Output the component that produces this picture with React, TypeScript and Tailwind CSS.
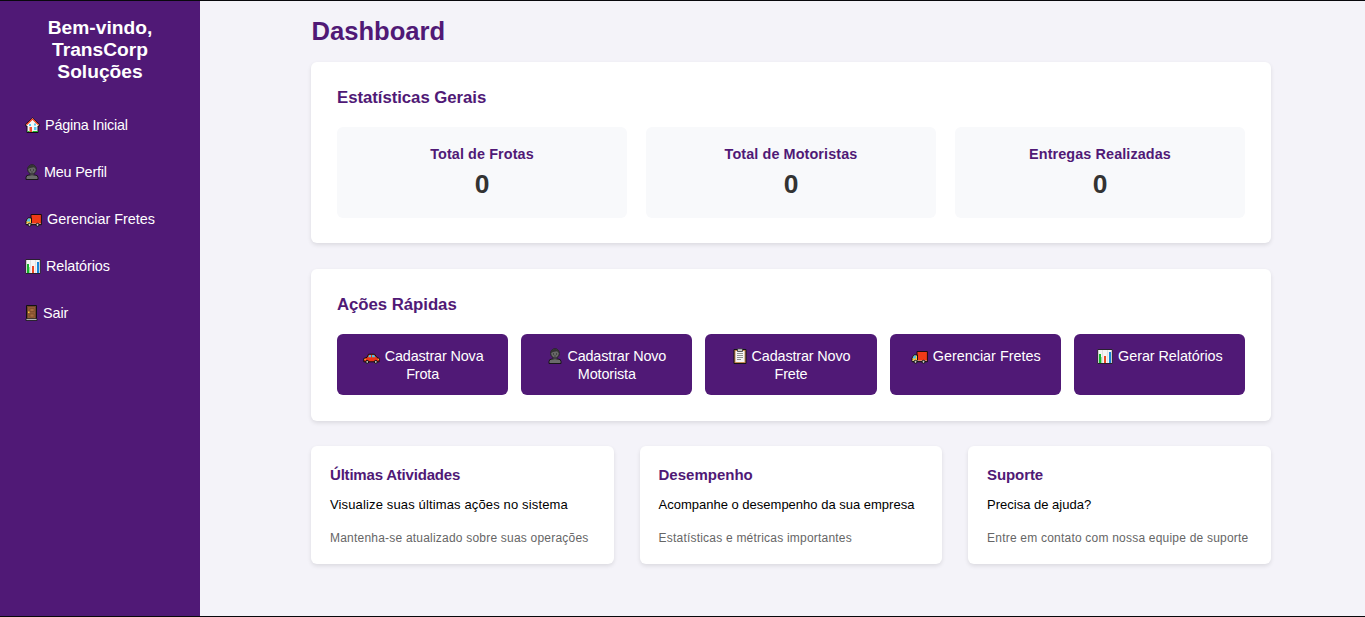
import type { ReactNode } from "react";

type IconProps = { className?: string };

function House({ className = "" }: IconProps) {
  return (
    <svg className={`inline-block h-4 w-[15px] shrink-0 ${className}`} viewBox="0 0 15 16">
      <path d="M7.5 .8 14.3 7.200V9H13v6.500H2V9H.7V7.200Z" fill="#f6f6f6" stroke="#140a18" strokeWidth="1" />
      <path d="M1.500 7.800 7.500 2 13.500 7.800" fill="none" stroke="#f03a17" strokeWidth="1.200" />
      <path d="M4 7h2v2H4zM9 6.500h2v2H9zM9 10h2.500v3H9z" fill="#55c8ee" />
      <path d="M4.500 10H7v5H4.500z" fill="#f05030" />
      <path d="M2.500 14.500h2M7.500 14.500H13" stroke="#25b72c" />
    </svg>
  );
}

function Person({ className = "" }: IconProps) {
  return (
    <svg className={`inline-block h-4 w-[14px] shrink-0 ${className}`} viewBox="0 0 14 16">
      <path d="M1 15.5V13.500Q1 11 4 11h6Q13 11 13 13.500V15.500Z" fill="#6b6b6b" stroke="#161616" />
      <path d="M5.500 9h3v2.800h-3z" fill="#606060" />
      <ellipse cx="7" cy="5.400" rx="4.300" ry="4.700" fill="#676767" stroke="#222" />
      <path d="M3 5C2.500 2 4.500 1 7 1C9.500 1 11.500 2 11 5L9 3.200L5 4Z" fill="#333" />
      <path d="M5 6h1M8 6h1" stroke="#222" />
      <path d="M6 8h2" stroke="#333" strokeWidth=".7" />
    </svg>
  );
}

function Truck({ className = "" }: IconProps) {
  return (
    <svg className={`inline-block h-4 w-[17px] shrink-0 ${className}`} viewBox="0 0 17 16">
      <path d="M6 3.500h10.400v10H6z" fill="#f03a17" stroke="#1a0c12" />
      <path d="M3 7h3.500v6.500H1V10Z" fill="#ffc83d" stroke="#1a0c12" />
      <path d="M3 7.500H5V10.500H1.500Z" fill="#4cc2e8" />
      <path d="M1 12.800h15" stroke="#ccc" strokeWidth=".7" />
      <path d="M1 13.700h15.500" stroke="#181818" />
      <circle cx="4.500" cy="13.800" r="1.500" fill="#ccc" stroke="#111" />
      <circle cx="12.500" cy="13.800" r="1.500" fill="#ccc" stroke="#111" />
    </svg>
  );
}

function Chart({ className = "" }: IconProps) {
  return (
    <svg className={`inline-block h-4 w-4 shrink-0 ${className}`} viewBox="0 0 16 16">
      <path d="M.7 1.500h14.600v14H.7z" fill="#f5f5f5" stroke="#29202e" />
      <path d="M5.500 2v13M10.500 2v13" stroke="#d8d8d8" strokeWidth=".7" />
      <path d="M2 6h2v9H2z" fill="#16b52c" />
      <path d="M4 9h1v6H4z" fill="#a0dda6" />
      <path d="M7 8h2v7H7z" fill="#ed4824" />
      <path d="M12 4h2v11h-2z" fill="#1687d9" />
    </svg>
  );
}

function Door({ className = "" }: IconProps) {
  return (
    <svg className={`inline-block h-4 w-[13px] shrink-0 ${className}`} viewBox="0 0 13 16">
      <path d="M1.500.5h10v14h-10z" fill="#70432c" stroke="#111" />
      <path d="M3 2h7v12H3z" fill="#915a35" />
      <path d="M5 3.500h4v3H5zM5 9h4v3H5z" fill="#a66b3f" stroke="#744327" strokeWidth=".6" />
      <path d="M3 6.500h1.500V8H3z" fill="#ffc83d" />
      <path d="M1 13.700h11v1.800H1z" fill="#cfcfcf" stroke="#111" strokeWidth=".8" />
    </svg>
  );
}

function Car({ className = "" }: IconProps) {
  return (
    <svg className={`inline-block h-4 w-[17px] shrink-0 ${className}`} viewBox="0 0 17 16">
      <path d="M.8 10.500 4 9.300 5.500 6.200h6L14 9.500l2.200 1v3.300H.8Z" fill="#ed3519" stroke="#171010" />
      <path d="M5.200 9.300 6.300 6.900H8v2.400zM9 6.900h2l1.500 2.400H9z" fill="#4cc2e8" />
      <path d="M1.300 11.300h1.500M14.800 11.300h1.200" stroke="#ffc83d" />
      <circle cx="4.200" cy="13.900" r="1.500" fill="#bbb" stroke="#111" />
      <circle cx="12.800" cy="13.900" r="1.500" fill="#bbb" stroke="#111" />
    </svg>
  );
}

function Clipboard({ className = "" }: IconProps) {
  return (
    <svg className={`inline-block h-4 w-[14px] shrink-0 ${className}`} viewBox="0 0 14 16">
      <path d="M1 1.500h12v14H1z" fill="#c88a52" stroke="#151515" />
      <path d="M2.500 3h9v11h-9z" fill="#f5f5f5" />
      <path d="M4.500.8h5v2.700h-5z" fill="#ccc" stroke="#333" strokeWidth=".8" />
      <path d="M4 5.500h6M4 7.500h6M4 9.500h6M4 11.500h4" stroke="#777" strokeWidth=".8" />
    </svg>
  );
}

const menu: { icon: ReactNode; label: string; tracking: string }[] = [
  { icon: <House />, label: "Página Inicial", tracking: "tracking-[-0.2px]" },
  { icon: <Person />, label: "Meu Perfil", tracking: "tracking-[-0.2px]" },
  { icon: <Truck />, label: "Gerenciar Fretes", tracking: "tracking-normal" },
  { icon: <Chart />, label: "Relatórios", tracking: "tracking-[-0.1px]" },
  { icon: <Door />, label: "Sair", tracking: "tracking-[-0.1px]" },
];

const stats = ["Total de Frotas", "Total de Motoristas", "Entregas Realizadas"];

const actions: { icon: ReactNode; first: string; second?: string; tracking: string }[] = [
  { icon: <Car />, first: "Cadastrar Nova", second: "Frota", tracking: "tracking-[-0.14px]" },
  { icon: <Person />, first: "Cadastrar Novo", second: "Motorista", tracking: "tracking-[-0.14px]" },
  { icon: <Clipboard />, first: "Cadastrar Novo", second: "Frete", tracking: "tracking-[-0.14px]" },
  { icon: <Truck />, first: "Gerenciar Fretes", tracking: "tracking-normal" },
  { icon: <Chart />, first: "Gerar Relatórios", tracking: "tracking-[-0.06px]" },
];

const cards = [
  {
    title: "Últimas Atividades",
    text: "Visualize suas últimas ações no sistema",
    note: "Mantenha-se atualizado sobre suas operações",
    titleTracking: "tracking-[-0.2px]",
    textTracking: "tracking-[0.14px]",
  },
  {
    title: "Desempenho",
    text: "Acompanhe o desempenho da sua empresa",
    note: "Estatísticas e métricas importantes",
    titleTracking: "tracking-normal",
    textTracking: "tracking-normal",
  },
  {
    title: "Suporte",
    text: "Precisa de ajuda?",
    note: "Entre em contato com nossa equipe de suporte",
    titleTracking: "tracking-[-0.1px]",
    textTracking: "tracking-normal",
  },
];

export default function App() {
  return (
    <div className="flex h-[617px] w-full overflow-hidden border-y border-[#08080c] bg-[#f4f3f9] font-['Liberation_Sans',Arial,sans-serif]">
      <aside className="w-[200px] shrink-0 bg-[#501976] text-white">
        <h2 className="pt-4 text-center text-[19.2px] leading-[22px] font-bold">
          Bem-vindo,<br />TransCorp<br />Soluções
        </h2>
        <nav className="mt-[18px] flex flex-col pl-[25px]">
          {menu.map((item) => (
            <a key={item.label} className={`flex h-[47px] items-center gap-[5px] text-[14.4px] leading-[18px] whitespace-nowrap ${item.tracking}`}>
              {item.icon}<span>{item.label}</span>
            </a>
          ))}
        </nav>
      </aside>
      <main className="ml-[111px] w-[960px] pt-[15px]">
        <h1 className="h-[46px] pl-[0.5px] text-[25.6px] leading-[30px] font-bold text-[#501976]">Dashboard</h1>
        <section className="h-[181px] rounded-md bg-white px-[26px] pt-[26px] shadow-[0_2px_4px_rgba(0,0,0,0.1)]">
          <h2 className="text-[16.8px] leading-5 font-bold tracking-[-0.05px] text-[#501976]">Estatísticas Gerais</h2>
          <div className="mt-[19px] grid grid-cols-3 gap-[19px]">
            {stats.map((title) => (
              <div key={title} className="h-[91px] rounded-md bg-[#f8f9fb] pt-[18px] text-center">
                <h3 className="text-[14.4px] leading-[18px] font-bold tracking-[0.1px] text-[#501976]">{title}</h3>
                <p className="mt-[6px] text-[26.4px] leading-[30px] font-bold text-[#333]">0</p>
              </div>
            ))}
          </div>
        </section>
        <section className="mt-[26px] h-[152px] rounded-md bg-white px-[26px] pt-[26px] shadow-[0_2px_4px_rgba(0,0,0,0.1)]">
          <h2 className="text-[16.8px] leading-5 font-bold tracking-[-0.05px] text-[#501976]">Ações Rápidas</h2>
          <div className="mt-[19px] grid grid-cols-5 gap-[13px]">
            {actions.map((item, index) => (
              <button key={index} className={`flex h-[61px] flex-col items-center rounded-md bg-[#501976] pt-[13px] text-[14.4px] leading-[18px] whitespace-nowrap text-white ${item.tracking}`}>
                <span className="flex items-center gap-[5px] pl-px">{item.icon}{item.first}</span>
                {item.second && <span>{item.second}</span>}
              </button>
            ))}
          </div>
        </section>
        <div className="mt-[25px] grid grid-cols-3 gap-[25.6px]">
          {cards.map((card) => (
            <section key={card.title} className="h-[118px] rounded-md bg-white px-[19px] pt-5 whitespace-nowrap shadow-[0_2px_4px_rgba(0,0,0,0.1)]">
              <h3 className={`text-[15px] leading-[18px] font-bold text-[#501976] ${card.titleTracking}`}>{card.title}</h3>
              <p className={`mt-[13px] text-[13px] leading-4 text-black ${card.textTracking}`}>{card.text}</p>
              <p className="mt-[18px] text-[12px] leading-[15px] tracking-[0.21px] text-[#666]">{card.note}</p>
            </section>
          ))}
        </div>
      </main>
    </div>
  );
}
